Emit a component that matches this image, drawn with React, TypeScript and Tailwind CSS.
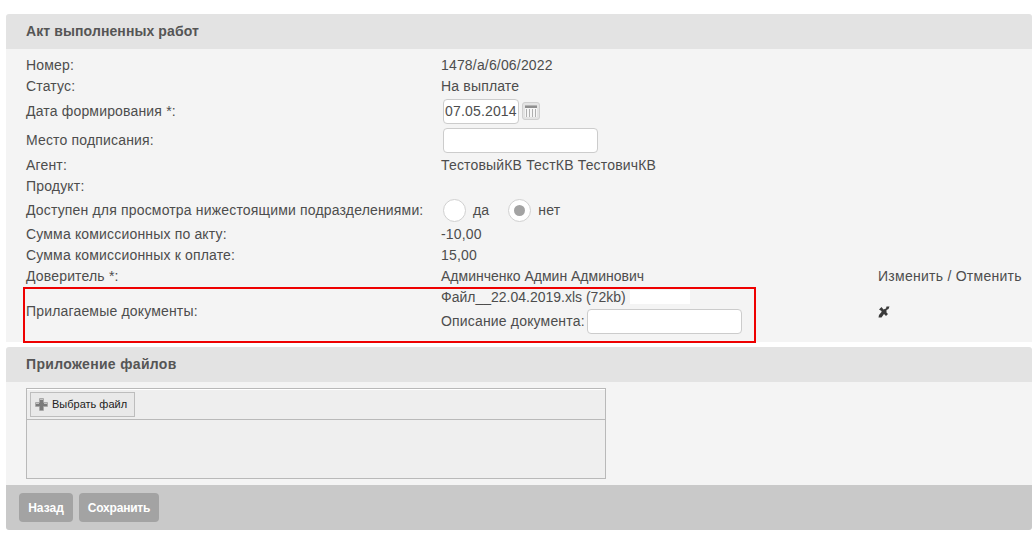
const rows = [
  { label: 'Номер:', value: '1478/а/6/06/2022', h: 'h-[21px]' },
  { label: 'Статус:', value: 'На выплате', h: 'h-[21px]' },
];

function CalendarIcon() {
  return (
    <div className="ml-[3px] mt-[3px] flex h-[18px] w-[18px] items-center justify-center rounded-[3px] border border-[#cfcfcf] bg-[#e4e4e4]">
      <svg width="12" height="12" viewBox="0 0 12 12">
        <rect x="0" y="0" width="12" height="1" fill="#b5b5b5" />
        <rect x="0" y="1" width="12" height="2" fill="#8f8f8f" />
        <rect x="0" y="3" width="12" height="9" fill="#f6f6f6" />
        <path d="M1.5 4v8M4.5 4v8M7.5 4v8M10.5 4v8" stroke="#b0b0b0" strokeWidth="1" />
      </svg>
    </div>
  );
}

function CrossIcon() {
  return (
    <svg width="12" height="12" viewBox="0 0 12 12" className="block">
      <path d="M1 3.5 3.5 1 5.5 3.5 8 2.5 8.5 0.5 11.5 0.5 10.5 3 8.5 4 8.5 6.5 10 8 8 10 6 8 3.5 11.5 0.5 11.5 1 9 3.5 6 3.5 5Z" fill="#3a3a3a" />
    </svg>
  );
}

function PlusIcon() {
  return (
    <svg width="13" height="13" viewBox="0 0 13 13">
      <path d="M4.5 0.5h4v4h4v4h-4v4h-4v-4h-4v-4h4z" fill="#7b7b7b" stroke="#a5a5a5" strokeWidth="0.6" />
      <path d="M5 1h3v1H5zM1 5h3v1H1zM9 5h3v1H9z" fill="#c4c4c4" />
    </svg>
  );
}

function Row({ label, h, children, action }: { label: string; h: string; children?: React.ReactNode; action?: React.ReactNode }) {
  return (
    <div className={`flex items-center ${h}`}>
      <div className="w-[415px] shrink-0 whitespace-nowrap">{label}</div>
      <div className="w-[437px] shrink-0">{children}</div>
      <div className="whitespace-nowrap tracking-[0.26px]">{action}</div>
    </div>
  );
}

function Radio({ checked }: { checked?: boolean }) {
  return (
    <div className="flex h-[23px] w-[23px] items-center justify-center rounded-full border border-[#d0d0d0] bg-white">
      {checked && <div className="h-[11px] w-[11px] rounded-full bg-[#a3a3a3]" />}
    </div>
  );
}

function TextBox({ w, children }: { w: string; children?: React.ReactNode }) {
  return (
    <div className={`flex h-[25px] items-center rounded-[4px] border border-[#cccccc] bg-white pl-px ${w}`}>
      {children}
    </div>
  );
}

function PanelHeader({ title, tracking }: { title: string; tracking: string }) {
  return (
    <div className={`flex h-[35px] items-center rounded-t-[3px] bg-[#e3e3e3] pl-5 text-[14px] font-bold text-[#555555] ${tracking}`}>
      {title}
    </div>
  );
}

export default function App() {
  return (
    <div className="relative h-[533px] w-[1032px] overflow-hidden bg-white pl-[6px] pt-[14px] font-['Liberation_Sans',sans-serif] text-[14px] text-[#4d4d4d]">
      <PanelHeader title="Акт выполненных работ" tracking="tracking-[0.1px]" />
      <div className="h-[293px] bg-[#f4f4f4] pl-5 pt-[6px] tracking-[0.17px]">
        {rows.map((r) => (
          <Row key={r.label} label={r.label} h={r.h}>
            {r.value}
          </Row>
        ))}
        <Row label="Дата формирования *:" h="h-[29px]">
          <div className="flex pl-[2px]">
            <TextBox w="w-[76px]">07.05.2014</TextBox>
            <CalendarIcon />
          </div>
        </Row>
        <Row label="Место подписания:" h="h-[29px]">
          <div className="pl-[2px]">
            <TextBox w="w-[155px]" />
          </div>
        </Row>
        <Row label="Агент:" h="h-[21px]">ТестовыйКВ ТестКВ ТестовичКВ</Row>
        <Row label="Продукт:" h="h-[21px]" />
        <Row label="Доступен для просмотра нижестоящими подразделениями:" h="h-[27px]">
          <div className="flex items-center pl-[2px]">
            <Radio />
            <span className="ml-[7px] mr-[19px]">да</span>
            <Radio checked />
            <span className="ml-[7px]">нет</span>
          </div>
        </Row>
        <Row label="Сумма комиссионных по акту:" h="h-[21px]">-10,00</Row>
        <Row label="Сумма комиссионных к оплате:" h="h-[21px]">15,00</Row>
        <Row label="Доверитель *:" h="h-[21px]" action="Изменить / Отменить">
          <span className="tracking-normal">Админченко Админ Админович</span>
        </Row>
        <Row label="Прилагаемые документы:" h="h-[49px]" action={<CrossIcon />}>
          <div className="pb-[3px]">
            <div className="flex items-center tracking-normal">
              Файл__22.04.2019.xls (72kb)
              <span className="ml-[4px] h-[14px] w-[60px] bg-white" />
            </div>
            <div className="mt-[1px] flex items-center">
              Описание документа:
              <div className="ml-[2px]">
                <TextBox w="w-[155px]" />
              </div>
            </div>
          </div>
        </Row>
      </div>

      <div className="absolute left-[23px] top-[287px] h-[56px] w-[733px] border-2 border-[#ee0000]" />

      <div className="mt-[5px]">
        <PanelHeader title="Приложение файлов" tracking="tracking-[0.33px]" />
        <div className="h-[103px] bg-[#f4f4f4] pl-5 pt-[6px]">
          <div className="h-[91px] w-[580px] border border-[#b9b9b9] bg-[#efefef]">
            <div className="flex h-[31px] items-center border-b border-[#b9b9b9] bg-[#eeeeee] pl-[3px] shadow-[inset_0_1px_0_#ffffff]">
              <div className="flex h-[25px] w-[105px] items-center border border-[#bdbdbd] bg-[#e9e9e9] pl-[4px] text-[11px] text-[#222222]">
                <PlusIcon />
                <span className="ml-[4px]">Выбрать файл</span>
              </div>
            </div>
          </div>
        </div>
        <div className="flex h-[45px] items-center gap-[6px] rounded-b-[3px] bg-[#c9c9c9] pl-[13px]">
          <div className="flex h-[29px] w-[54px] items-center justify-center rounded-[4px] bg-[#a3a3a3] text-[12px] font-bold text-white">Назад</div>
          <div className="flex h-[29px] w-[80px] items-center justify-center rounded-[4px] bg-[#a3a3a3] text-[12px] font-bold tracking-[-0.2px] text-white">Сохранить</div>
        </div>
      </div>
    </div>
  );
}
